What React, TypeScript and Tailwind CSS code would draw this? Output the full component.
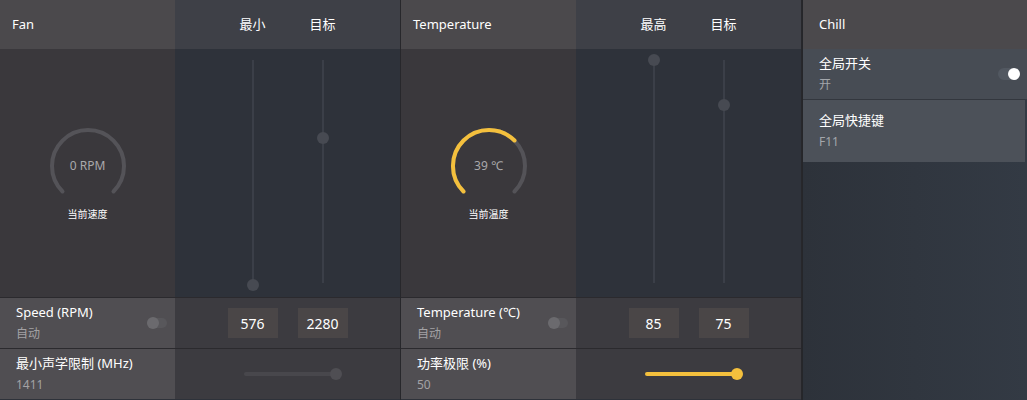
import React from "react";

const font = { fontFamily: '"Noto Sans", "Noto Sans CJK SC", sans-serif' };

const Gauge = ({ text, yellow }: { text: string; yellow?: boolean }) => (
  <div className="flex flex-col items-center">
    <div className="relative w-[80px] h-[80px]">
      <svg width="80" height="80" viewBox="0 0 80 80">
        <path
          d="M 14.5 65.5 A 36 36 0 1 1 65.5 65.5"
          fill="none"
          stroke="#545358"
          strokeWidth="4"
          strokeLinecap="round"
        />
        {yellow && (
          <path
            d="M 14.5 65.5 A 36 36 0 0 1 65.5 14.5"
            fill="none"
            stroke="#f4c03d"
            strokeWidth="4"
            strokeLinecap="round"
          />
        )}
      </svg>
      <div className="absolute inset-0 flex items-center justify-center text-[12px] text-[#a9a8ab]">
        {text}
      </div>
    </div>
    <div className="mt-[1px] text-[10px] text-white">{yellow ? "当前温度" : "当前速度"}</div>
  </div>
);

const VSlider = ({ thumb }: { thumb: number }) => (
  <div className="relative w-[2px] h-full bg-[#3b3f48]">
    <div
      className="absolute left-1/2 -translate-x-1/2 -translate-y-1/2 w-[12px] h-[12px] rounded-full bg-[#474a52] blur-[0.6px]"
      style={{ top: `${thumb}%` }}
    />
  </div>
);

const Toggle = ({ on }: { on?: boolean }) =>
  on ? (
    <div className="relative w-[22px] h-[12px] rounded-full bg-[#525861]">
      <div className="absolute right-0 top-1/2 -translate-y-1/2 w-[12px] h-[12px] rounded-full bg-white" />
    </div>
  ) : (
    <div className="relative w-[20px] h-[10px] rounded-full bg-[#58575b]">
      <div className="absolute left-0 top-1/2 -translate-y-1/2 w-[12px] h-[12px] rounded-full bg-[#6b6a6e]" />
    </div>
  );

const Box = ({ v }: { v: string }) => (
  <div className="w-[50px] h-[30px] bg-[#4a4647] flex items-center justify-center text-[14px] text-white">
    {v}
  </div>
);

const Section = ({
  title,
  a,
  b,
  gauge,
  thumbs,
  row1,
  row2,
  boxes,
  yellow,
}: {
  title: string;
  a: string;
  b: string;
  gauge: string;
  thumbs: [number, number];
  row1: string;
  row2: [string, string];
  boxes: [string, string];
  yellow?: boolean;
}) => (
  <div className="w-[401px] grid grid-cols-[175px_225px] grid-rows-[49px_248px_51px_51px] border-r border-[#27272b]">
    <div className="bg-[#4b494c] flex items-center pl-[12px] text-[13px] text-white">{title}</div>
    <div className="bg-[#3e4047] flex items-center justify-center gap-[44px] text-[13px] text-white">
      <span>{a}</span>
      <span>{b}</span>
    </div>
    <div className="bg-[#3a383c] flex items-center justify-center pt-[1px]">
      <Gauge text={gauge} yellow={yellow} />
    </div>
    <div className="bg-[#2e323a] flex justify-center gap-[68px] pt-[11px] pb-[14px]">
      <VSlider thumb={thumbs[0]} />
      <VSlider thumb={thumbs[1]} />
    </div>
    <div className="bg-[#504e52] border-t border-[#2b2a2e] flex items-center justify-between pl-[16px] pr-[8px]">
      <div className="leading-[21px]">
        <div className="text-[13px] text-white">{row1}</div>
        <div className="text-[12px] text-[#a3a2a5]">自动</div>
      </div>
      <Toggle />
    </div>
    <div className="bg-[#3c3b40] border-t border-[#2b2a2e] flex items-center justify-center gap-[20px]">
      <Box v={boxes[0]} />
      <Box v={boxes[1]} />
    </div>
    <div className="bg-[#504e52] border-t border-[#2b2a2e] flex items-center pl-[16px]">
      <div className="leading-[21px]">
        <div className="text-[13px] text-white">{row2[0]}</div>
        <div className="text-[12px] text-[#a3a2a5]">{row2[1]}</div>
      </div>
    </div>
    <div className="bg-[#3c3b40] border-t border-[#2b2a2e] flex items-center justify-center pl-[4px]">
      <div className={`relative w-[92px] h-[4px] rounded-full ${yellow ? "bg-[#f4c03d]" : "bg-[#48474c]"}`}>
        <div
          className={`absolute right-[-6px] top-1/2 -translate-y-1/2 w-[12px] h-[12px] rounded-full ${
            yellow ? "bg-[#f4c03d]" : "bg-[#4f4e53]"
          }`}
        />
      </div>
    </div>
  </div>
);

export default function App() {
  return (
    <div className="w-[1027px] h-[400px] flex overflow-hidden bg-[#2e323a]" style={font}>
      <Section
        title="Fan"
        a="最小"
        b="目标"
        gauge="0 RPM"
        thumbs={[101, 35]}
        row1="Speed (RPM)"
        row2={["最小声学限制 (MHz)", "1411"]}
        boxes={["576", "2280"]}
      />
      <Section
        title="Temperature"
        a="最高"
        b="目标"
        gauge="39 ℃"
        thumbs={[0, 20]}
        row1="Temperature (℃)"
        row2={["功率极限 (%)", "50"]}
        boxes={["85", "75"]}
        yellow
      />
      <div className="flex-1 flex flex-col border-l border-[#25262a] bg-gradient-to-r from-[#2d323a] to-[#333a44]">
        <div className="h-[49px] bg-[#4b494c] flex items-center pl-[16px] text-[13px] text-white">Chill</div>
        <div className="h-[50px] bg-[#474c54] flex items-center justify-between pl-[16px] pr-[7px]">
          <div className="leading-[21px]">
            <div className="text-[13px] text-white">全局开关</div>
            <div className="text-[12px] text-[#a3a6ab]">开</div>
          </div>
          <Toggle on />
        </div>
        <div className="h-[63px] bg-[#4c5159] border-t border-[#33373e] mr-[2px] flex items-center pl-[16px]">
          <div className="leading-[21px]">
            <div className="text-[13px] text-white">全局快捷键</div>
            <div className="text-[12px] text-[#a3a6ab]">F11</div>
          </div>
        </div>
      </div>
    </div>
  );
}
